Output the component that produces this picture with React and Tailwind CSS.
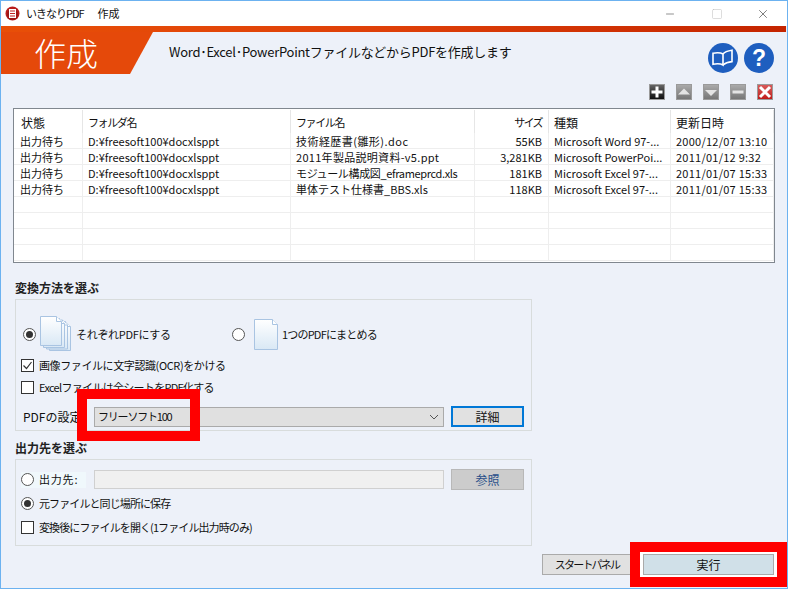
import { Minus, Square, X } from 'lucide-react'

const font = { jp: 'font-["Noto_Sans_CJK_JP",sans-serif]' }

const rows = [
	['出力待ち', 'D:¥freesoft100¥docxlsppt', '技術経歴書(雛形).doc', '55KB', 'Microsoft Word 97-...', '2000/12/07 13:10'],
	['出力待ち', 'D:¥freesoft100¥docxlsppt', '2011年製品説明資料-v5.ppt', '3,281KB', 'Microsoft PowerPoi...', '2011/01/12 9:32'],
	['出力待ち', 'D:¥freesoft100¥docxlsppt', 'モジュール構成図_eframeprcd.xls', '181KB', 'Microsoft Excel 97-...', '2011/01/07 15:33'],
	['出力待ち', 'D:¥freesoft100¥docxlsppt', '単体テスト仕様書_BBS.xls', '118KB', 'Microsoft Excel 97-...', '2011/01/07 15:33'],
	['', '', '', '', '', ''],
	['', '', '', '', '', ''],
	['', '', '', '', '', ''],
	['', '', '', '', '', ''],
]

const headers = [
	['状態', 'pl-[7px]'],
	['フォルダ名', 'pl-[5px] text-[11px] tracking-[-1.4px]'],
	['ファイル名', 'pl-[5px] text-[11px] tracking-[-1.4px]'],
	['サイズ', 'text-right pr-[6px] text-[11px] tracking-[-1.6px]'],
	['種類', 'pl-[5px]'],
	['更新日時', 'pl-[5px]'],
]

const nameTracking = ['tracking-[0.45px]', 'tracking-[0.3px]', 'tracking-[-0.35px]', 'tracking-normal', '', '', '', '']
const cols = 'grid grid-cols-[69px_208px_184px_74px_122px_1fr]'

function cellClass(i, j) {
	if (j === 0) return 'pl-[6px] text-[11.5px]'
	if (j === 2) return `pl-[5px] ${nameTracking[i]}`
	if (j === 3) return 'text-right pr-[6px]'
	if (j === 5) return 'pl-[5px] tracking-[0.25px]'
	return 'pl-[5px]'
}

function Logo() {
	return (
		<svg width="15" height="15" viewBox="0 0 15 15">
			<circle cx="7.5" cy="7.5" r="7" fill="#b81c1c" />
			<circle cx="7.5" cy="8.5" r="5.5" fill="#7c1010" opacity="0.5" />
			<rect x="4" y="3" width="7" height="9" fill="#fff" />
			<path d="M5 5h5M5 7.5h5M5 10h5" stroke="#c02020" strokeWidth="1" />
		</svg>
	)
}

function ToolButton({ bg, children }) {
	return (
		<div className={`w-4 h-4 border border-[#9a9a9a] flex items-center justify-center ${bg}`}>
			<svg width="14" height="14" viewBox="1 1 14 14">
				{children}
			</svg>
		</div>
	)
}

function Radio({ on }) {
	return (
		<span className="w-[13px] h-[13px] rounded-full border border-[#555] bg-white flex items-center justify-center shrink-0">
			{on && <span className="w-[7px] h-[7px] rounded-full bg-[#333]" />}
		</span>
	)
}

function Check({ on }) {
	return (
		<span className="w-[13px] h-[13px] border border-[#333] bg-white flex items-center justify-center shrink-0">
			{on && (
				<svg width="11" height="11" viewBox="0 0 11 11">
					<path d="M1.5 5.5l3 3 5-6.5" fill="none" stroke="#333" strokeWidth="1.2" />
				</svg>
			)}
		</span>
	)
}

function Page({ x, y }) {
	return (
		<g transform={`translate(${x} ${y})`}>
			<path d="M.5.5h16l5 5v24H.5z" fill="url(#pg)" stroke="#a9c4e2" />
			<path d="M16.5.5v5h5" fill="#fff" stroke="#a9c4e2" />
		</g>
	)
}

function DocStack() {
	return (
		<svg width="33" height="36" viewBox="0 0 33 36" className="shrink-0">
			<defs>
				<linearGradient id="pg" x1="0" y1="0" x2="0" y2="1">
					<stop offset="0" stopColor="#ffffff" />
					<stop offset="1" stopColor="#d9e8f5" />
				</linearGradient>
			</defs>
			<Page x={9} y={5} />
			<Page x={6} y={3.5} />
			<Page x={3} y={2} />
			<Page x={0} y={0} />
		</svg>
	)
}

function DocSingle() {
	return (
		<svg width="25" height="31" viewBox="0 0 25 31" className="shrink-0">
			<defs>
				<linearGradient id="pg2" x1="0" y1="0" x2="0" y2="1">
					<stop offset="0" stopColor="#ffffff" />
					<stop offset="1" stopColor="#d9e8f5" />
				</linearGradient>
			</defs>
			<path d="M.5.5h18l5 5v25H.5z" fill="url(#pg2)" stroke="#a9c4e2" />
			<path d="M18.5.5v5h5" fill="#fff" stroke="#a9c4e2" />
		</svg>
	)
}

export default function App() {
	return (
		<div
			className={`relative w-[788px] h-[589px] overflow-hidden border border-[#6cb2f0] bg-[#edf1f9] text-[12px] text-[#111] ${font.jp}`}
		>
			{/* title bar */}
			<div className="h-[25px] bg-white flex items-center pl-[4px]">
				<Logo />
				<span className="ml-[6px] text-[11px] tracking-[-1px]">いきなりPDF</span>
				<span className="ml-[14px] text-[11px]">作成</span>
				<div className="ml-auto flex items-center text-[#222]">
					<Minus size={12} strokeWidth={1} className="mr-[35px]" />
					<Square size={12} strokeWidth={1} className="mr-[33px] text-[#bbb]" />
					<X size={14} strokeWidth={1} className="mr-[17px]" />
				</div>
			</div>
			<div className="h-[6px] bg-gradient-to-r from-[#e84f08] via-[#de3f08] to-[#c42400] mr-[1px]" />

			{/* header */}
			<div className="h-[42px] flex">
				<div className="w-[152px] h-full bg-[#e5490a] [clip-path:polygon(0_0,100%_0,129px_100%,0_100%)] pl-[33px] text-white text-[32px] leading-[40px] font-light">
					作成
				</div>
				<div className="ml-[16px] mt-[11px] text-[13px] tracking-[-0.27px] leading-[18px] whitespace-nowrap">
					Word･Excel･PowerPointファイルなどからPDFを作成します
				</div>
				<div className="ml-auto mr-[13px] mt-[11px] flex gap-[6px]">
					<div className="w-[30px] h-[30px] rounded-full bg-[#1e5ebf] flex items-center justify-center">
						<svg width="24" height="18" viewBox="0 0 24 18" fill="none" stroke="#fff" strokeWidth="1.6">
							<path d="M12 5C10 3.8 6 3.6 2 4.2v11C6 14.6 10 14.8 12 16V5z" />
							<path d="M12 5C13.5 3 17 1.8 21 1.2v11.4C17 13 14 14.2 12 16" />
						</svg>
					</div>
					<div className="w-[30px] h-[30px] rounded-full bg-[#1e5ebf] flex items-center justify-center text-white text-[23px] font-bold leading-none font-['Liberation_Sans',sans-serif]">
						?
					</div>
				</div>
			</div>

			{/* toolbar */}
			<div className="mt-[10px] flex justify-end gap-[11px] mr-[14px]">
				<ToolButton bg="bg-gradient-to-b from-[#666] to-[#111]">
					<path d="M6.5 2.5h3v4h4v3h-4v4h-3v-4h-4v-3h4z" fill="#fff" />
				</ToolButton>
				<ToolButton bg="bg-gradient-to-b from-[#aaa] to-[#777]">
					<path d="M8 4.5l6 6H2z" fill="#e4e4e4" />
				</ToolButton>
				<ToolButton bg="bg-gradient-to-b from-[#aaa] to-[#777]">
					<path d="M8 12l-6-6h12z" fill="#e4e4e4" />
				</ToolButton>
				<ToolButton bg="bg-gradient-to-b from-[#aaa] to-[#777]">
					<rect x="2.5" y="6.5" width="11" height="3" fill="#e4e4e4" />
				</ToolButton>
				<ToolButton bg="bg-gradient-to-b from-[#d85a5a] to-[#c01818]">
					<path d="M3 3l10 10M13 3L3 13" stroke="#fff" strokeWidth="3" />
				</ToolButton>
			</div>

			{/* file list */}
			<div className="mt-[8px] ml-[12px] w-[762px] h-[155px] border border-[#80878f] bg-white overflow-hidden">
				<div className={`${cols} h-[24px] pt-[1px]`}>
					{headers.map(([h, cls]) => (
						<div key={h} className={`h-[23px] leading-[25px] border-r border-[#e6e6e6] whitespace-nowrap ${cls}`}>
							{h}
						</div>
					))}
				</div>
				{rows.map((r, i) => (
					<div key={i} className={`${cols} h-[16px] border-b border-[#eeeeee]`}>
						{r.map((c, j) => (
							<div
								key={j}
								className={`h-[15px] leading-[17px] text-[11px] border-r border-[#eeeeee] overflow-hidden whitespace-nowrap ${cellClass(i, j)}`}
							>
								{c}
							</div>
						))}
					</div>
				))}
			</div>

			{/* conversion method */}
			<div className="mt-[17px] ml-[14px] h-[16px] leading-[16px] font-bold text-[#222]">変換方法を選ぶ</div>
			<div className="mt-[3px] ml-[14px] w-[517px] h-[132px] border border-[#d8dcdc] pt-[16px] pl-[5px]">
				<div className="h-[36px] flex items-center">
					<span className="ml-[2px]"><Radio on /></span>
					<span className="ml-[4px]"><DocStack /></span>
					<span className="ml-[3px] w-[156px] text-[11px] tracking-[-0.3px]">それぞれPDFにする</span>
					<Radio />
					<span className="ml-[9px]"><DocSingle /></span>
					<span className="ml-[3px] text-[11px] tracking-[-0.8px]">1つのPDFにまとめる</span>
				</div>
				<div className="mt-[2px] h-[22px] flex items-center gap-[5px]">
					<Check on />
					<span className="text-[11px] tracking-[-0.4px]">画像ファイルに文字認識(OCR)をかける</span>
				</div>
				<div className="h-[22px] flex items-center gap-[5px]">
					<Check />
					<span className="text-[11px] tracking-[-0.7px]">Excelファイルは全シートをPDF化する</span>
				</div>
				<div className="mt-[8px] flex items-center">
					<span className="w-[73px] pl-[2px] whitespace-nowrap">PDFの設定</span>
					<div className="w-[350px] h-[20px] border border-[#aaa] bg-[#e0e0e0] flex items-center justify-between pl-[3px] pr-[3px]">
						<span className="text-[11px] tracking-[-1.2px]">フリーソフト100</span>
						<svg width="12" height="12" viewBox="0 0 12 12" fill="none" stroke="#555">
							<path d="M2 4l4 4 4-4" />
						</svg>
					</div>
					<div className="ml-[7px] w-[73px] h-[21px] border-2 border-[#0078d7] bg-[#e1e1e1] flex items-center justify-center">
						詳細
					</div>
				</div>
			</div>

			{/* output */}
			<div className="mt-[9px] ml-[14px] h-[16px] leading-[16px] font-bold text-[#222]">出力先を選ぶ</div>
			<div className="mt-[3px] ml-[14px] w-[517px] h-[87px] border border-[#d8dcdc] pl-[5px] pt-[9px]">
				<div className="h-[21px] flex items-center">
					<div className="w-[65px] h-[16px] bg-[#f0f8fc] flex items-center gap-[5px]">
						<Radio />
						<span className="text-[11px] tracking-[0.8px]">出力先:</span>
					</div>
					<div className="ml-[8px] w-[350px] h-[19px] bg-[#f0f0f0] border border-[#d0d0d0]" />
					<div className="ml-[7px] w-[73px] h-[21px] border border-[#b8b8b8] bg-[#cccccc] text-[#2a4f8a] flex items-center justify-center">
						参照
					</div>
				</div>
				<div className="mt-[1px] h-[24px] flex items-center gap-[5px]">
					<Radio on />
					<span className="text-[11px] tracking-[-0.9px]">元ファイルと同じ場所に保存</span>
				</div>
				<div className="h-[24px] flex items-center gap-[5px]">
					<Check />
					<span className="text-[11px] tracking-[-0.9px]">変換後にファイルを開く(1ファイル出力時のみ)</span>
				</div>
			</div>

			{/* bottom buttons */}
			<div className="mt-[8px] ml-[541px] flex">
				<div className="w-[90px] h-[21px] border border-[#aaa] bg-[#e1e1e1] flex items-center justify-center text-[11px] tracking-[-1.8px]">
					スタートパネル
				</div>
				<div className="ml-[11px] w-[131px] h-[21px] border border-[#aaa] bg-[#d0e0e8] shadow-[0_0_0_3px_#ffffff] flex items-center justify-center">
					実行
				</div>
			</div>

			{/* red annotation boxes */}
			<div className="absolute left-[76px] top-[388px] w-[123px] h-[52px] border-[10px] border-[#ff0000]" />
			<div className="absolute left-[629px] top-[541px] w-[157px] h-[45px] border-[10px] border-[#ff0000]" />
		</div>
	)
}
